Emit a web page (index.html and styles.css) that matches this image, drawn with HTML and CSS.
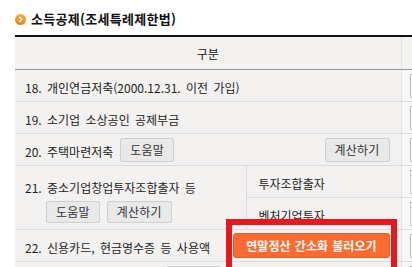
FILE: index.html
```html
<!DOCTYPE html>
<html lang="ko">
<head>
	<meta charset="UTF-8">
	<title>소득공제</title>
	<link rel="stylesheet" href="styles.css">
</head>
<body>
	<div class="secTit">
		<span class="bullet">
			<svg width="11" height="11" viewBox="0 0 11 11">
				<defs>
					<linearGradient id="bg" x1="0" y1="0" x2="0" y2="1">
						<stop offset="0" stop-color="#fbb040"/>
						<stop offset="1" stop-color="#ee7d12"/>
					</linearGradient>
				</defs>
				<circle cx="5.5" cy="5.5" r="5.5" fill="url(#bg)"/>
				<path d="M4.3 3 L6.8 5.5 L4.3 8" fill="none" stroke="#fff" stroke-width="1.7"/>
			</svg>
		</span>
		<h2>소득공제(조세특례제한법)</h2>
	</div>
	<table class="deduct">
		<colgroup><col class="c1"><col class="c2"><col class="c3"></colgroup>
		<thead>
			<tr><th colspan="2">구분</th><th class="amtHd"></th></tr>
		</thead>
		<tbody>
			<tr>
				<td colspan="2">18. 개인연금저축(2000.12.31. 이전 가입)</td>
				<td class="amt"><span class="field"></span></td>
			</tr>
			<tr>
				<td colspan="2">19. 소기업 소상공인 공제부금</td>
				<td class="amt"><span class="field"></span></td>
			</tr>
			<tr>
				<td colspan="2">
					<div class="line">
						<span>20. 주택마련저축</span>
						<button class="btn">도움말</button>
						<button class="btn right">계산하기</button>
					</div>
				</td>
				<td class="amt"><span class="field"></span></td>
			</tr>
			<tr>
				<td rowspan="2" class="multi">
					<p>21. 중소기업창업투자조합출자 등</p>
					<div class="btns">
						<button class="btn">도움말</button>
						<button class="btn">계산하기</button>
					</div>
				</td>
				<td class="sub">투자조합출자</td>
				<td class="amt"><span class="field off"></span></td>
			</tr>
			<tr>
				<td class="sub">벤처기업투자</td>
				<td class="amt"><span class="field off"></span></td>
			</tr>
			<tr>
				<td colspan="2">
					<div class="line">
						<span>22. 신용카드, 현금영수증 등 사용액</span>
						<span class="loadWrap right">
							<button class="btnLoad">연말정산 간소화 불러오기</button>
							<span class="mark"></span>
						</span>
					</div>
				</td>
				<td class="amt"><span class="field"></span></td>
			</tr>
			<tr>
				<td colspan="2" class="next">
					<span class="stub"></span>
				</td>
				<td class="amt"><span class="field"></span></td>
			</tr>
		</tbody>
	</table>
</body>
</html>
```

FILE: styles.css
```css
* { padding: 0; margin: 0; }
html { overflow: hidden; }
body { background: #fff; font-family: "Noto Sans CJK KR", "Noto Sans", sans-serif; font-size: 12px; color: #222; }

.secTit { display: flex; align-items: center; gap: 5px; padding: 12px 15px 0; height: 14px; margin-bottom: 9px; }
.secTit .bullet { display: block; width: 11px; height: 11px; }
.secTit .bullet svg { display: block; }
.secTit h2 { font-size: 13px; font-weight: bold; line-height: 14px; color: #111; letter-spacing: 0.3px; }

.deduct { border-collapse: collapse; table-layout: fixed; width: 486px; margin-left: 15px; border-top: 2px solid #111; word-spacing: 2px; }
.deduct .c1 { width: 231px; }
.deduct .c2 { width: 155px; }
.deduct .c3 { width: 100px; }
.deduct th { height: 32px; background: #f3f2f0; border-bottom: 1px solid #999; font-weight: normal; font-size: 12px; color: #222; }
.deduct th.amtHd { border-left: 1px solid #e4e4e4; }
.deduct td { height: 32px; padding: 3px 11px 0 10px; box-sizing: border-box; background: #f3f2f0; border-bottom: 1px solid #dcdcdc; vertical-align: middle; white-space: nowrap; }
.deduct td.sub { padding-left: 12px; border-left: 1px solid #dcdcdc; }
.deduct td.multi { padding-top: 6px; }
.deduct td.multi .btns { display: flex; gap: 7px; margin: 5px 0 0 21px; }
.deduct td.amt { padding: 0 0 0 8px; background: #f8f8f8; border-left: 1px solid #e4e4e4; }
.deduct td.next { vertical-align: top; padding-top: 4px; }

.line { display: flex; align-items: center; gap: 7px; }
.line .right { margin-left: auto; }

.field { display: block; width: 80px; height: 24px; box-sizing: border-box; border: 1px solid #b9b9b9; background: #fff; }
.field.off { border: 1px dotted #bbb; background: #f1f1f1; }
.stub { display: block; width: 55px; height: 24px; margin-left: 141px; box-sizing: border-box; border: 1px solid #cfcfcf; border-radius: 2px; background: #e9e9e9; }

.btn { height: 24px; padding: 0 9px; border: 1px solid #cfcfcf; border-radius: 2px; background: #e9e9e9; font-family: inherit; font-size: 12px; letter-spacing: 0.2px; color: #333; margin-top: -3px; }
.multi .btn { height: 22px; margin-top: 0; }

.loadWrap { position: relative; display: block; margin-top: -3px; }
.btnLoad { display: block; height: 25px; padding: 0 12px; border: 1px solid #e85d22; border-radius: 3px; background: #ff6b2e; font-family: inherit; font-size: 12px; font-weight: bold; word-spacing: 1px; color: #fff; }
.mark { position: absolute; left: -7px; right: -7px; top: -14px; bottom: -18px; border: 6px solid #e8161d; }
```
